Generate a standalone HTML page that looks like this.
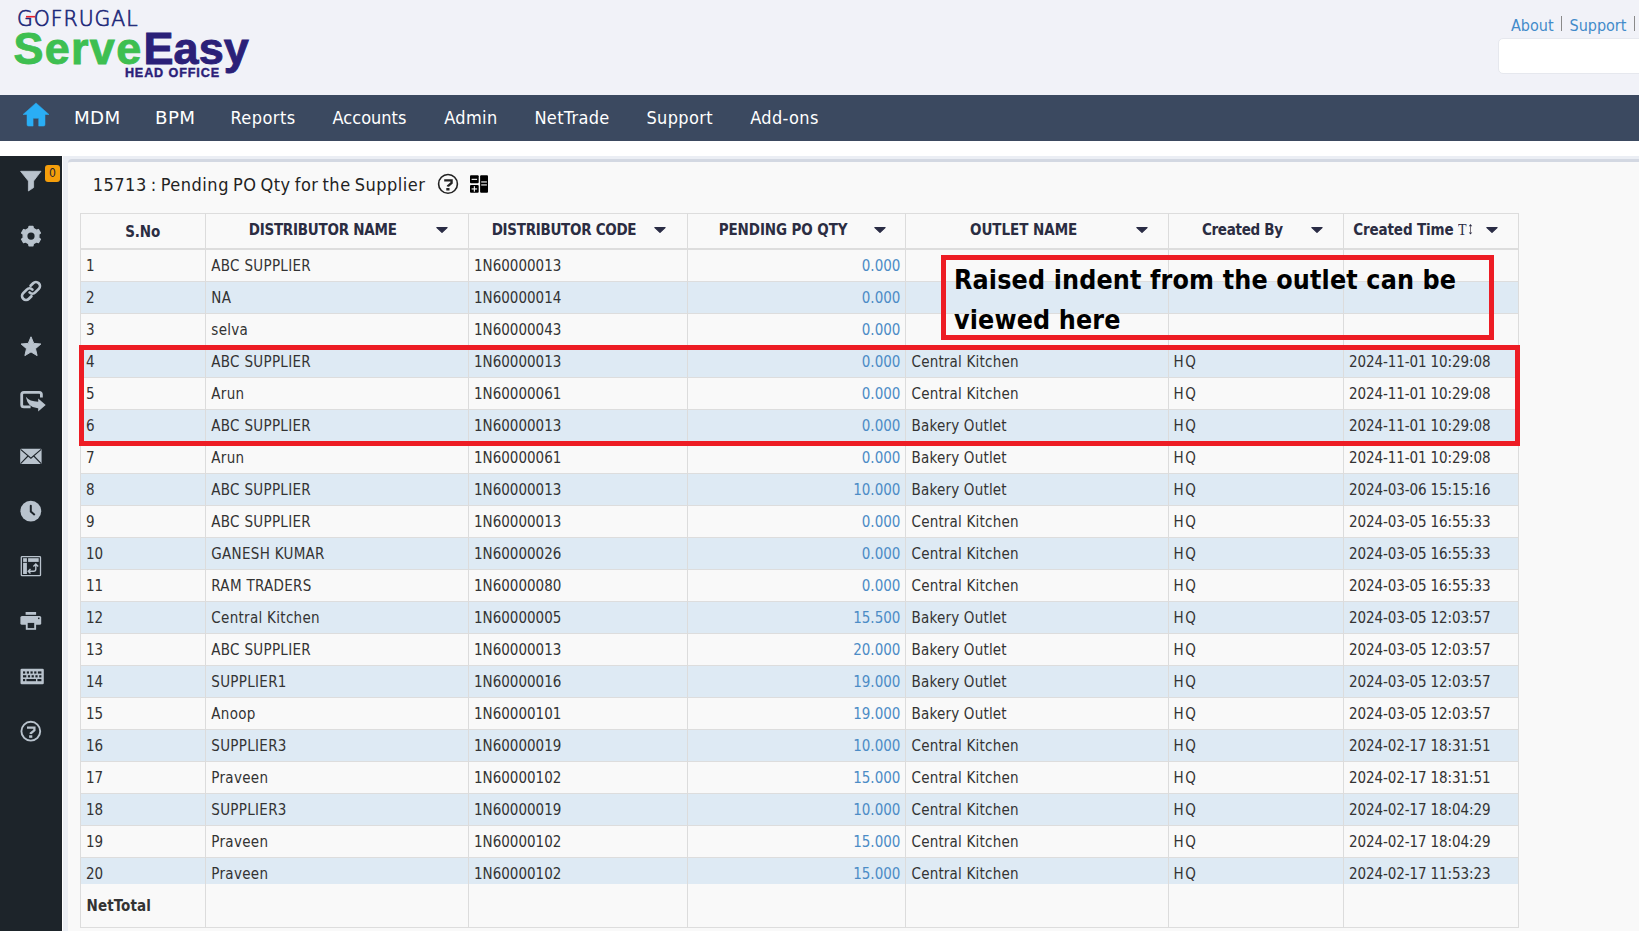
<!DOCTYPE html>
<html lang="en">
<head>
<meta charset="utf-8">
<title>15713 : Pending PO Qty for the Supplier</title>
<style>
*{box-sizing:border-box;margin:0;padding:0}
html,body{width:1639px;height:931px;overflow:hidden;background:#fff}
body{position:relative;font-family:"DejaVu Sans Condensed","Liberation Sans",sans-serif;font-size:15px;color:#333;-webkit-font-smoothing:antialiased}
.abs{position:absolute}
#hdr{position:absolute;left:0;top:0;width:1639px;height:95px;background:#f1f2f8}
#nav{position:absolute;left:0;top:95px;width:1639px;height:46px;background:#3b4960}
#nav span{position:absolute;top:11px;font-size:18px;line-height:24px;color:#fff;white-space:nowrap;letter-spacing:.35px}
#side{position:absolute;left:0;top:156px;width:62px;height:775px;background:#1d242a}
#side svg{position:absolute;overflow:visible}
#cbg{position:absolute;left:63px;top:156px;width:1576px;height:775px;background:#ebeef4}
#panel{position:absolute;left:68px;top:159px;width:1580px;height:780px;background:#f9f9f9;border-top:3px solid #d3d8e2;border-radius:4px 0 0 0}
#title{position:absolute;left:92.7px;top:173.2px;font-size:18px;line-height:24px;color:#222;white-space:nowrap;letter-spacing:.5px;word-spacing:-1.6px}
/* table */
#tbl{position:absolute;left:80px;top:213px;width:1439px;height:715px}
.vl{position:absolute;top:0;width:1px;height:715px;background:#dcdcdc;z-index:2}
.hl{position:absolute;left:0;width:1439px;height:1px;background:#dddddd}
.th{position:absolute;top:6px;height:24px;line-height:24px;font-weight:700;font-size:15px;color:#2b2d42;white-space:nowrap;letter-spacing:-.25px}
.tri{position:absolute;top:12.7px;width:12px;height:8px}
#body{position:absolute;left:1px;top:37px;width:1437px;height:634px;overflow:hidden}
.r{position:absolute;left:0;width:1437px;height:32px;border-bottom:1px solid #dddddd}
.r.b{background:#deeaf4}
.r span{position:absolute;top:4px;line-height:24px;white-space:nowrap}
.c1{left:5px}.c2{left:130.3px;letter-spacing:.3px}.c3{left:393px}.c4{right:617.6px;color:#4c8cc6}.c5{left:830.5px;letter-spacing:.2px}.c6{left:1092.5px;letter-spacing:1.7px}.c7{left:1268px;letter-spacing:-.1px}
#net{position:absolute;left:6.5px;top:680.5px;letter-spacing:.1px;font-weight:700;line-height:24px;color:#333}
.red{position:absolute;border:5px solid #ed1c24;z-index:3}
#call{z-index:3;position:absolute;left:954px;top:260.2px;font-family:"DejaVu Sans Condensed","Liberation Sans",sans-serif;font-weight:700;font-size:26.6px;line-height:40px;color:#000;white-space:nowrap;letter-spacing:.14px}
</style>
</head>
<body>
<div id="hdr">
<svg class="abs" style="left:0;top:0" width="270" height="95" viewBox="0 0 270 95">
<text x="16.9" y="26" font-family="'DejaVu Sans Light','DejaVu Sans','Liberation Sans',sans-serif" font-size="20.4" fill="#1f2a7a" stroke="#1f2a7a" stroke-width="0.7" letter-spacing="1">GOFRUGAL</text>
<rect x="26" y="15.9" width="9" height="1.6" fill="#e8212b"/>
<text x="13.4" y="64.3" font-family="'Liberation Sans',sans-serif" font-weight="700" font-size="45" fill="#3ebf51" stroke="#3ebf51" stroke-width="0.9" letter-spacing="1.3">Serve</text>
<text x="143.6" y="64.3" font-family="'Liberation Sans',sans-serif" font-weight="700" font-size="45" fill="#2b2078" stroke="#2b2078" stroke-width="0.9" letter-spacing="0">Easy</text>
<text x="124.9" y="77.3" font-family="'Liberation Sans',sans-serif" font-weight="700" font-size="12.6" fill="#2b2078" stroke="#2b2078" stroke-width=".4" letter-spacing=".88">HEAD OFFICE</text>
</svg>
<span class="abs" style="left:1511px;top:15px;font-size:16px;line-height:22px;color:#428bca;white-space:nowrap">About</span>
<span class="abs" style="left:1560.5px;top:16px;width:1px;height:15px;background:#8a8a8a"></span>
<span class="abs" style="left:1569.5px;top:15px;font-size:16px;line-height:22px;color:#428bca;white-space:nowrap">Support</span>
<span class="abs" style="left:1634px;top:16px;width:1px;height:15px;background:#8a8a8a"></span>
<div class="abs" style="left:1498px;top:38.3px;width:160px;height:36.2px;background:#fff;border:1px solid #e6e8ee;border-radius:5px"></div>
</div>
<div id="nav">
<svg class="abs" style="left:22px;top:7px" width="28" height="26" viewBox="0 0 28 26"><path d="M14 .9 L27 12.5 H23 V22.6 Q23 24.1 21.5 24.1 H16.7 V16.3 H11.1 V24.1 H6.5 Q5 24.1 5 22.6 V12.5 H1 Z" fill="#2aaef5" stroke="#2aaef5" stroke-width=".5" stroke-linejoin="round"/></svg>
<span style="left:73.7px;transform:scaleX(1.125);transform-origin:0 0">MDM</span><span style="left:155.4px;transform:scaleX(1.125);transform-origin:0 0">BPM</span><span style="left:230.4px;letter-spacing:.45px">Reports</span><span style="left:332.6px;letter-spacing:0">Accounts</span><span style="left:444.2px">Admin</span><span style="left:534.4px">NetTrade</span><span style="left:646.4px">Support</span><span style="left:750.2px">Add-ons</span>
</div>
<div id="side"><svg style="left:0;top:0" width="62" height="600" viewBox="0 156 62 600"><path d="M20.6 171.3 H41 L33.6 181 V187.6 L28.4 191 V181 Z" fill="#b9c3cd" stroke="#b9c3cd" stroke-width=".8" stroke-linejoin="round"/><path d="M28.63 228.35 L29.01 226.30 L32.99 226.30 L33.37 228.35 L36.52 230.18 L38.49 229.47 L40.48 232.93 L38.89 234.28 L38.89 237.92 L40.48 239.27 L38.49 242.73 L36.52 242.02 L33.37 243.85 L32.99 245.90 L29.01 245.90 L28.63 243.85 L25.48 242.02 L23.51 242.73 L21.52 239.27 L23.11 237.92 L23.11 234.28 L21.52 232.93 L23.51 229.47 L25.48 230.18Z" fill="#b9c3cd" stroke="#b9c3cd" stroke-width="1.2" stroke-linejoin="round"/><circle cx="31" cy="236.1" r="3.6" fill="#1d242a"/><g transform="rotate(-45 31 291)" fill="none" stroke="#b9c3cd" stroke-width="2.7" stroke-linecap="round"><path d="M27.6 295 H24 A4 4 0 0 1 24 287 H29 A4 4 0 0 1 33 291"/><path d="M34.4 287 H38 A4 4 0 0 1 38 295 H33 A4 4 0 0 1 29 291"/></g><path d="M31.00 336.80 L33.76 343.40 L40.89 343.99 L35.47 348.65 L37.11 355.61 L31.00 351.90 L24.89 355.61 L26.53 348.65 L21.11 343.99 L28.24 343.40Z" fill="#b9c3cd" stroke="#b9c3cd" stroke-width="1" stroke-linejoin="round"/><path d="M41.4 397.4 V394.6 Q41.4 392.4 39.2 392.4 H23.9 Q21.7 392.4 21.7 394.6 V404.7 Q21.7 406.9 23.9 406.9 H30.6" fill="none" stroke="#b9c3cd" stroke-width="2.8"/><path d="M25.8 396.8 Q29.6 401.6 38.2 401.8 V398.6 L45.7 405 L38.2 411.4 V408.2 Q28 408.4 25.8 396.8Z" fill="#b9c3cd"/><rect x="20.2" y="448.8" width="21.4" height="15.2" rx="1" fill="#b9c3cd"/><path d="M20.6 449.4 L30.9 458.2 L41.2 449.4 M20.6 463.6 L28 456 M41.2 463.6 L33.8 456" fill="none" stroke="#1d242a" stroke-width="1.1"/><circle cx="30.8" cy="511.2" r="10.4" fill="#b9c3cd"/><path d="M30.8 505.8 V511.6 L34.2 514.4" fill="none" stroke="#1d242a" stroke-width="2" stroke-linecap="round"/><rect x="21.3" y="556.6" width="19.2" height="19.1" rx=".8" fill="none" stroke="#b9c3cd" stroke-width="1.3"/><rect x="23.1" y="558.2" width="3.8" height="3.7" fill="#b9c3cd"/><rect x="28.1" y="558.2" width="10.6" height="3.7" fill="#b9c3cd"/><rect x="23.1" y="562.8" width="3.8" height="11.2" fill="#b9c3cd"/><path d="M28.4 571.3 H33.6 Q35.8 571.3 35.8 569 V564.4 M30.5 569 L28.2 571.3 L30.5 573.6 M33.4 566.5 L35.8 564 L38.2 566.5" fill="none" stroke="#b9c3cd" stroke-width="1.4"/><rect x="25.6" y="612" width="10.5" height="2.8" fill="#b9c3cd"/><rect x="20.4" y="616" width="20.8" height="8.8" rx="1.6" fill="#b9c3cd"/><rect x="25.8" y="621.6" width="10.3" height="8.2" fill="#b9c3cd"/><rect x="27.7" y="622.9" width="6.5" height="5.2" fill="#1d242a"/><rect x="38" y="617.6" width="1.5" height="1.5" fill="#1d242a"/><rect x="20.5" y="668.8" width="23.3" height="15.4" rx="1.3" fill="#b9c3cd"/><rect x="23" y="671.4" width="2.2" height="2.2" fill="#1d242a"/><rect x="26.8" y="671.4" width="2.2" height="2.2" fill="#1d242a"/><rect x="30.5" y="671.4" width="2.2" height="2.2" fill="#1d242a"/><rect x="34.2" y="671.4" width="2.2" height="2.2" fill="#1d242a"/><rect x="37.9" y="671.4" width="3.5" height="2.2" fill="#1d242a"/><rect x="23" y="675.2" width="3.3" height="2.2" fill="#1d242a"/><rect x="27.9" y="675.2" width="2.2" height="2.2" fill="#1d242a"/><rect x="31.6" y="675.2" width="2.2" height="2.2" fill="#1d242a"/><rect x="35.4" y="675.2" width="2.2" height="2.2" fill="#1d242a"/><rect x="39.2" y="675.2" width="2.2" height="2.2" fill="#1d242a"/><rect x="23" y="679" width="2.2" height="2.2" fill="#1d242a"/><rect x="26.4" y="679" width="9.6" height="2.2" fill="#1d242a"/><rect x="37.4" y="679" width="4" height="2.2" fill="#1d242a"/><circle cx="30.8" cy="731.2" r="9.4" fill="none" stroke="#b9c3cd" stroke-width="1.9"/><path d="M27 727.6 H34.4 V730.3 L30.8 733.3 V733.9" fill="none" stroke="#b9c3cd" stroke-width="2.3"/><rect x="29.1" y="735.3" width="3.2" height="2.5" fill="#b9c3cd"/></svg><span class="abs" style="left:45px;top:9px;width:15px;height:17px;border-radius:3px;background:#f59e0b;color:#1d2433;font-size:12px;line-height:16px;text-align:center">0</span></div>
<div id="cbg"></div>
<div id="panel"></div>
<div id="title">15713 : Pending PO Qty for the Supplier</div>
<svg class="abs" style="left:436px;top:172px" width="24" height="24" viewBox="0 0 24 24"><circle cx="12" cy="11.9" r="9.4" fill="none" stroke="#222" stroke-width="1.6"/><path d="M8.2 8.3 H15.6 V11 L12 14 V14.6" fill="none" stroke="#222" stroke-width="2.3" stroke-linejoin="miter"/><rect x="10.3" y="16" width="3.2" height="2.5" fill="#222"/></svg>
<svg class="abs" style="left:470px;top:175px" width="18" height="18" viewBox="0 0 18 18"><rect x="0" y="0.2" width="8.7" height="8.1" rx="1" fill="#000"/><rect x="0" y="10" width="8.7" height="7.8" rx="1" fill="#000"/><rect x="10.1" y="0.2" width="7.9" height="17.6" rx="1" fill="#000"/><rect x="1.6" y="3.8" width="5.5" height="1.1" fill="#fff"/><rect x="1.6" y="13.4" width="5.5" height="1.1" fill="#fff"/><rect x="3.8" y="11.2" width="1.1" height="5.5" fill="#fff"/><rect x="11.2" y="6.4" width="5.7" height="1.1" fill="#fff"/><rect x="11.2" y="9.4" width="5.7" height="1.1" fill="#fff"/></svg>
<div id="tbl">
<div class="hl" style="top:0"></div><div class="hl" style="top:35px;height:2px"></div><div class="hl" style="top:714px"></div>
<div class="vl" style="left:0"></div><div class="vl" style="left:125px"></div><div class="vl" style="left:388px"></div><div class="vl" style="left:607px"></div><div class="vl" style="left:825px"></div><div class="vl" style="left:1088px"></div><div class="vl" style="left:1263px"></div><div class="vl" style="left:1438px"></div>
<div class="th" style="left:45.2px;top:7.2px;letter-spacing:-0.1px">S.No</div><div class="th" style="left:168.7px;top:5.2px;letter-spacing:-0.25px">DISTRIBUTOR NAME</div><svg class="tri" style="left:355.8px" viewBox="0 0 12 8"><path d="M.9 1.5 H11.1 L6 6.4 Z" fill="#2a2c45" stroke="#2a2c45" stroke-width="1.2" stroke-linejoin="round"/></svg><div class="th" style="left:411.7px;top:5.2px;letter-spacing:-0.3px">DISTRIBUTOR CODE</div><svg class="tri" style="left:574.3px" viewBox="0 0 12 8"><path d="M.9 1.5 H11.1 L6 6.4 Z" fill="#2a2c45" stroke="#2a2c45" stroke-width="1.2" stroke-linejoin="round"/></svg><div class="th" style="left:638.7px;top:5.2px;letter-spacing:-0.1px">PENDING PO QTY</div><svg class="tri" style="left:793.5px" viewBox="0 0 12 8"><path d="M.9 1.5 H11.1 L6 6.4 Z" fill="#2a2c45" stroke="#2a2c45" stroke-width="1.2" stroke-linejoin="round"/></svg><div class="th" style="left:890.0px;top:5.2px;letter-spacing:-0.05px">OUTLET NAME</div><svg class="tri" style="left:1055.8px" viewBox="0 0 12 8"><path d="M.9 1.5 H11.1 L6 6.4 Z" fill="#2a2c45" stroke="#2a2c45" stroke-width="1.2" stroke-linejoin="round"/></svg><div class="th" style="left:1121.9px;top:5.2px;letter-spacing:-0.3px">Created By</div><svg class="tri" style="left:1230.8px" viewBox="0 0 12 8"><path d="M.9 1.5 H11.1 L6 6.4 Z" fill="#2a2c45" stroke="#2a2c45" stroke-width="1.2" stroke-linejoin="round"/></svg><div class="th" style="left:1273.2px;top:5.2px;letter-spacing:-0.12px">Created Time</div><svg class="tri" style="left:1405.8px" viewBox="0 0 12 8"><path d="M.9 1.5 H11.1 L6 6.4 Z" fill="#2a2c45" stroke="#2a2c45" stroke-width="1.2" stroke-linejoin="round"/></svg><div class="abs" style="left:1377.8px;top:4.1px;font-family:'Liberation Serif',serif;font-size:17.5px;line-height:24px;color:#2a2c45;transform:scaleX(.8);transform-origin:0 0">T</div><svg class="abs" style="left:1387.9px;top:11px" width="5" height="11" viewBox="0 0 5 11"><path d="M2.5 .1 L4.2 2.3 H.8 Z M2.5 10.6 L4.2 8.4 H.8 Z" fill="#2a2c45"/><rect x="2.05" y="2" width=".9" height="7" fill="#6b6470"/></svg>
<div id="body">
<div class="r" style="top:0px"><span class="c1">1</span><span class="c2">ABC SUPPLIER</span><span class="c3">1N60000013</span><span class="c4">0.000</span></div>
<div class="r b" style="top:32px"><span class="c1">2</span><span class="c2">NA</span><span class="c3">1N60000014</span><span class="c4">0.000</span></div>
<div class="r" style="top:64px"><span class="c1">3</span><span class="c2">selva</span><span class="c3">1N60000043</span><span class="c4">0.000</span></div>
<div class="r b" style="top:96px"><span class="c1">4</span><span class="c2">ABC SUPPLIER</span><span class="c3">1N60000013</span><span class="c4">0.000</span><span class="c5">Central Kitchen</span><span class="c6">HQ</span><span class="c7">2024-11-01 10:29:08</span></div>
<div class="r" style="top:128px"><span class="c1">5</span><span class="c2">Arun</span><span class="c3">1N60000061</span><span class="c4">0.000</span><span class="c5">Central Kitchen</span><span class="c6">HQ</span><span class="c7">2024-11-01 10:29:08</span></div>
<div class="r b" style="top:160px"><span class="c1">6</span><span class="c2">ABC SUPPLIER</span><span class="c3">1N60000013</span><span class="c4">0.000</span><span class="c5">Bakery Outlet</span><span class="c6">HQ</span><span class="c7">2024-11-01 10:29:08</span></div>
<div class="r" style="top:192px"><span class="c1">7</span><span class="c2">Arun</span><span class="c3">1N60000061</span><span class="c4">0.000</span><span class="c5">Bakery Outlet</span><span class="c6">HQ</span><span class="c7">2024-11-01 10:29:08</span></div>
<div class="r b" style="top:224px"><span class="c1">8</span><span class="c2">ABC SUPPLIER</span><span class="c3">1N60000013</span><span class="c4">10.000</span><span class="c5">Bakery Outlet</span><span class="c6">HQ</span><span class="c7">2024-03-06 15:15:16</span></div>
<div class="r" style="top:256px"><span class="c1">9</span><span class="c2">ABC SUPPLIER</span><span class="c3">1N60000013</span><span class="c4">0.000</span><span class="c5">Central Kitchen</span><span class="c6">HQ</span><span class="c7">2024-03-05 16:55:33</span></div>
<div class="r b" style="top:288px"><span class="c1">10</span><span class="c2">GANESH KUMAR</span><span class="c3">1N60000026</span><span class="c4">0.000</span><span class="c5">Central Kitchen</span><span class="c6">HQ</span><span class="c7">2024-03-05 16:55:33</span></div>
<div class="r" style="top:320px"><span class="c1">11</span><span class="c2">RAM TRADERS</span><span class="c3">1N60000080</span><span class="c4">0.000</span><span class="c5">Central Kitchen</span><span class="c6">HQ</span><span class="c7">2024-03-05 16:55:33</span></div>
<div class="r b" style="top:352px"><span class="c1">12</span><span class="c2">Central Kitchen</span><span class="c3">1N60000005</span><span class="c4">15.500</span><span class="c5">Bakery Outlet</span><span class="c6">HQ</span><span class="c7">2024-03-05 12:03:57</span></div>
<div class="r" style="top:384px"><span class="c1">13</span><span class="c2">ABC SUPPLIER</span><span class="c3">1N60000013</span><span class="c4">20.000</span><span class="c5">Bakery Outlet</span><span class="c6">HQ</span><span class="c7">2024-03-05 12:03:57</span></div>
<div class="r b" style="top:416px"><span class="c1">14</span><span class="c2">SUPPLIER1</span><span class="c3">1N60000016</span><span class="c4">19.000</span><span class="c5">Bakery Outlet</span><span class="c6">HQ</span><span class="c7">2024-03-05 12:03:57</span></div>
<div class="r" style="top:448px"><span class="c1">15</span><span class="c2">Anoop</span><span class="c3">1N60000101</span><span class="c4">19.000</span><span class="c5">Bakery Outlet</span><span class="c6">HQ</span><span class="c7">2024-03-05 12:03:57</span></div>
<div class="r b" style="top:480px"><span class="c1">16</span><span class="c2">SUPPLIER3</span><span class="c3">1N60000019</span><span class="c4">10.000</span><span class="c5">Central Kitchen</span><span class="c6">HQ</span><span class="c7">2024-02-17 18:31:51</span></div>
<div class="r" style="top:512px"><span class="c1">17</span><span class="c2">Praveen</span><span class="c3">1N60000102</span><span class="c4">15.000</span><span class="c5">Central Kitchen</span><span class="c6">HQ</span><span class="c7">2024-02-17 18:31:51</span></div>
<div class="r b" style="top:544px"><span class="c1">18</span><span class="c2">SUPPLIER3</span><span class="c3">1N60000019</span><span class="c4">10.000</span><span class="c5">Central Kitchen</span><span class="c6">HQ</span><span class="c7">2024-02-17 18:04:29</span></div>
<div class="r" style="top:576px"><span class="c1">19</span><span class="c2">Praveen</span><span class="c3">1N60000102</span><span class="c4">15.000</span><span class="c5">Central Kitchen</span><span class="c6">HQ</span><span class="c7">2024-02-17 18:04:29</span></div>
<div class="r b" style="top:608px"><span class="c1">20</span><span class="c2">Praveen</span><span class="c3">1N60000102</span><span class="c4">15.000</span><span class="c5">Central Kitchen</span><span class="c6">HQ</span><span class="c7">2024-02-17 11:53:23</span></div>
</div>
<div id="net">NetTotal</div>
</div>
<div class="red" style="left:79px;top:345px;width:1441px;height:101px"></div>
<div class="red" style="left:941px;top:255px;width:553px;height:85px"></div>
<div id="call">Raised indent from the outlet can be<br>viewed here</div>
</body>
</html>
